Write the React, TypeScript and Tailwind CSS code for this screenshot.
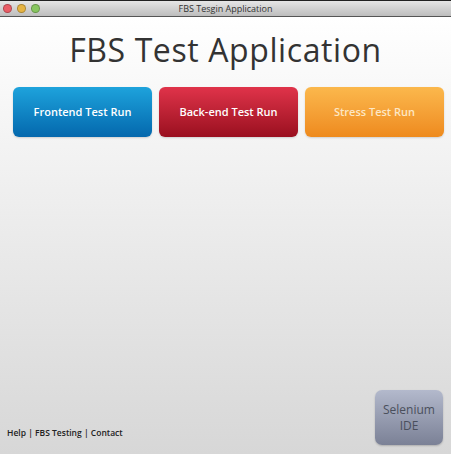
import type React from 'react';

interface TestButton {
	id: string;
	label: string;
	className: string;
}

const BUTTONS: TestButton[] = [
	{
		id: 'frontend',
		label: 'Frontend Test Run',
		className: 'bg-gradient-to-b from-[#1ea3dc] to-[#0568ad] text-white',
	},
	{
		id: 'backend',
		label: 'Back-end Test Run',
		className: 'bg-gradient-to-b from-[#e0334a] to-[#9a0f1f] text-white',
	},
	{
		id: 'stress',
		label: 'Stress Test Run',
		className: 'bg-gradient-to-b from-[#fbb84c] to-[#ee8a1c] text-[#fde7c4]',
	},
];

function TrafficLight({ color }: { color: string }) {
	return <span className={`w-[9px] h-[9px] rounded-full border border-black/25 ${color}`} />;
}

export default function App(): React.ReactElement {
	return (
		<div className="w-[451px] h-[454px] flex flex-col overflow-hidden font-['Open_Sans',sans-serif]">
			<div className="relative h-[17px] flex items-center border-b border-[#555] bg-gradient-to-b from-[#e6e6e6] to-[#bdbdbd] border-t border-t-[#222]">
				<div className="flex items-center gap-[5px] pl-[3px]">
					<TrafficLight color="bg-[#ea5d66]" />
					<TrafficLight color="bg-[#e6b443]" />
					<TrafficLight color="bg-[#88c660]" />
				</div>
				<span className="absolute inset-x-0 text-center text-[9px] text-[#333] leading-none">
					FBS Tesgin Application
				</span>
			</div>

			<div className="flex-1 flex flex-col bg-gradient-to-b from-white to-[#d7d7d7]">
				<h1 className="mt-[14px] text-center text-[32px] leading-[38px] text-[#333] tracking-[0.6px]">
					FBS Test Application
				</h1>
				<div className="mt-[18px] pl-[13px] pr-[8px] flex gap-[7px]">
					{BUTTONS.map(btn => (
						<button
							key={btn.id}
							className={`w-[139px] h-[50px] shrink-0 rounded-[6px] text-[11px] font-semibold shadow-[0_1px_2px_rgba(0,0,0,0.15)] ${btn.className}`}>
							{btn.label}
						</button>
					))}
				</div>

				<div className="mt-auto flex items-end justify-between pl-[7px] pr-[8px] pb-[9px]">
					<div className="pb-[5px] text-[8.5px] font-semibold text-[#222]">
						Help | FBS Testing | Contact
					</div>
					<div className="w-[68px] h-[55px] flex flex-col items-center justify-center rounded-[7px] bg-gradient-to-b from-[#b3b9cc] to-[#7b8196] text-[12px] leading-[16px] text-[#4a4f5c] shadow-[0_1px_2px_rgba(0,0,0,0.2)]">
						<span>Selenium</span>
						<span>IDE</span>
					</div>
				</div>
			</div>
		</div>
	);
}
